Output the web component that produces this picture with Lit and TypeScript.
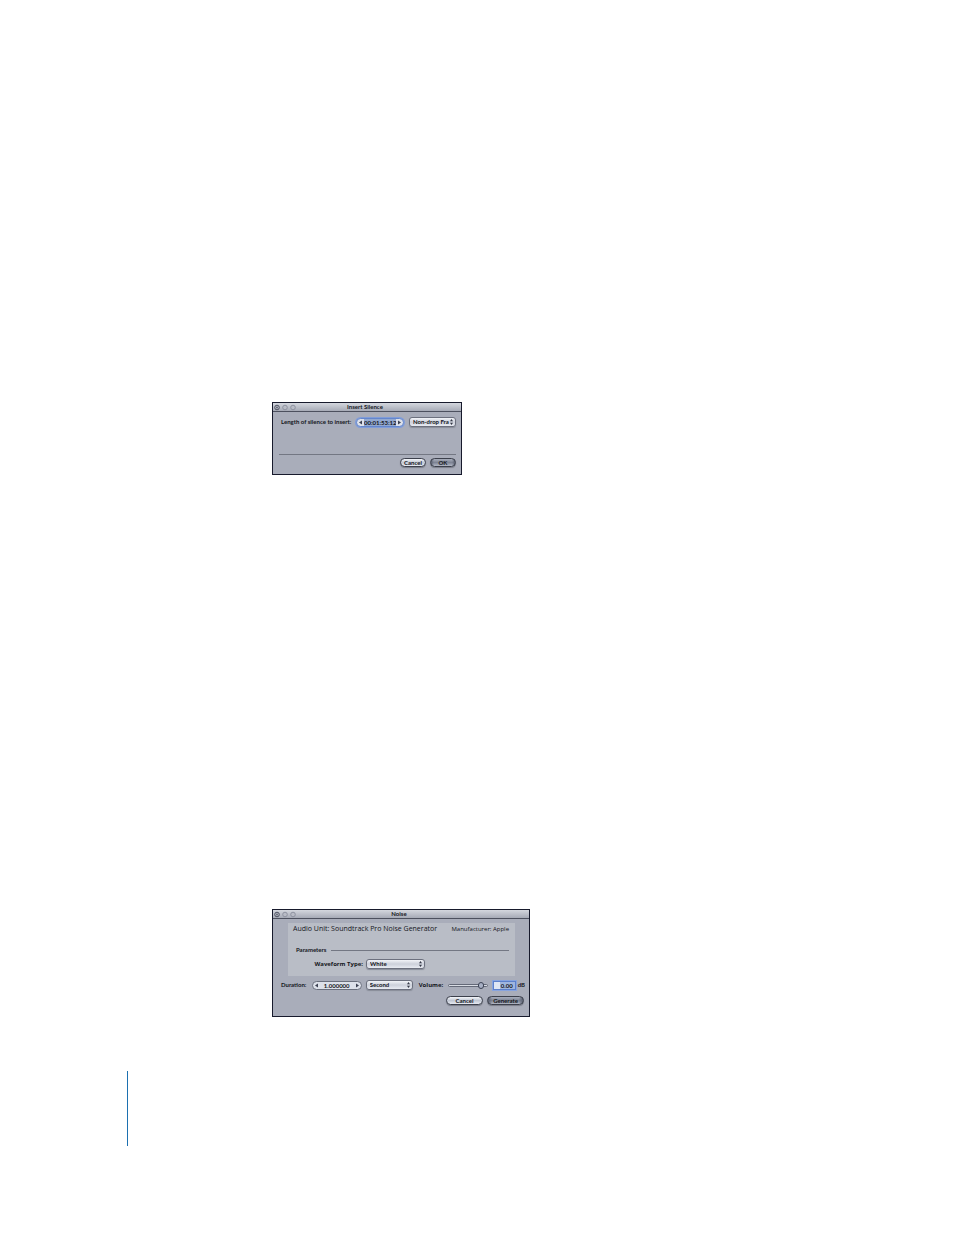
import { LitElement, html, css } from "lit";
import { customElement, property } from "lit/decorators.js";

const controls = css`
  :host {
    display: block;
    font: 700 6px/10px Lato, "Noto Sans", sans-serif;
    color: #14161c;
  }
  * {
    box-sizing: border-box;
  }
  button,
  input,
  select {
    margin: 0;
    padding: 0;
    border: 0;
    background: none;
    font: inherit;
    color: inherit;
    outline: none;
    appearance: none;
  }
  .row {
    display: flex;
    align-items: center;
  }
  .push {
    height: 9px;
    border: 1px solid #3c404c;
    border-radius: 5px;
    background: linear-gradient(#f4f6fa, #c2c8d4 50%, #e6eaf2);
    line-height: 7px;
    text-align: center;
    box-shadow: 0 1px 1px #7a7e8a;
  }
  .primary {
    background: linear-gradient(90deg, #5c6272, transparent 12% 88%, #5c6272),
      linear-gradient(#a8aebc, #7e8494 50%, #b0b6c4);
  }
  .menu {
    position: relative;
    display: flex;
    flex: none;
    height: 10px;
    border: 1px solid #6c707e;
    border-radius: 3px;
    background: linear-gradient(#f2f4f8, #ccd0da 50%, #e8ebf2);
    box-shadow: 0 1px 1px #888c98;
  }
  .menu select {
    width: 100%;
    height: 8px;
    padding-left: 3px;
    padding-right: 6px;
    line-height: 8px;
    overflow: hidden;
    text-overflow: clip;
  }
  .menu svg {
    position: absolute;
    right: 2px;
    top: 1px;
    pointer-events: none;
  }
  .spin {
    display: flex;
    flex: none;
    align-items: center;
    height: 9px;
    border: 1px solid #6b707e;
    border-radius: 5px;
    background: #dde1ea;
  }
  .spin input {
    flex: 1;
    min-width: 0;
    height: 7px;
    line-height: 7px;
    text-align: center;
  }
  .spin button {
    display: flex;
    justify-content: center;
    width: 7px;
  }
  .focused {
    border-color: #6486cc;
    box-shadow: 0 0 0 1px #809cd8;
  }
  .focused input {
    background: #92a8d0;
  }
  .wide {
    font-family: "Open Sans", "Noto Sans", sans-serif;
  }
  .rule {
    height: 1px;
    background: #737783;
  }
`;

const stepArrow = (left: boolean) => html`
  <svg width="3" height="5" viewBox="0 0 3 5" aria-hidden="true">
    <path d=${left ? "M3 0.5V4.5L0 2.5Z" : "M0 0.5V4.5L3 2.5Z"} fill="#3c4152" />
  </svg>
`;

const menuArrows = html`
  <svg width="3" height="6" viewBox="0 0 3 6" aria-hidden="true">
    <path d="M0 2.3H3L1.5 0ZM0 3.7H3L1.5 6Z" fill="#343846" />
  </svg>
`;

@customElement("panel-window")
export class PanelWindow extends LitElement {
  @property() heading = "";

  static styles = css`
    :host {
      display: block;
      box-sizing: border-box;
      border: 1px solid #171a2c;
      background: #a9adba;
      font: 700 6px/8px Lato, "Noto Sans", sans-serif;
      color: #14161c;
    }
    .bar {
      display: grid;
      grid-template-columns: 1fr auto 1fr;
      align-items: center;
      height: 8px;
      border-bottom: 1px solid #4c505e;
      background: linear-gradient(#d4d7de, #a6aab6);
    }
    h2 {
      margin: 0;
      padding-right: 4px;
      font: inherit;
    }
  `;

  render() {
    return html`
      <header class="bar">
        <svg width="23" height="7" viewBox="0 0 23 7" aria-hidden="true">
          <g fill="#b9bcc6" stroke="#8e92a0">
            <circle cx="4" cy="3.5" r="2.3" stroke="#4c5060" />
            <circle cx="12" cy="3.5" r="2.3" />
            <circle cx="20" cy="3.5" r="2.3" />
          </g>
          <circle cx="4" cy="3.5" r="0.9" fill="#5a5e6c" />
        </svg>
        <h2>${this.heading}</h2>
      </header>
      <slot></slot>
    `;
  }
}

@customElement("silence-dialog")
export class SilenceDialog extends LitElement {
  static styles = [
    controls,
    css`
      :host {
        width: 190px;
      }
      .body {
        padding: 5px 5px 7px 6px;
      }
      .fields {
        padding-left: 2px;
      }
      .fields label {
        flex: 1;
        white-space: nowrap;
      }
      .spin {
        width: 48px;
        margin-right: 5px;
      }
      .menu {
        width: 47px;
      }
      .rule {
        margin: 27px 0 3px;
      }
      .actions {
        justify-content: flex-end;
        gap: 4px;
      }
      .push {
        width: 26px;
      }
    `,
  ];

  render() {
    return html`
      <panel-window heading="Insert Silence">
        <div class="body">
          <div class="row fields">
            <label for="length">Length of silence to insert:</label>
            <div class="spin focused">
              <button aria-label="Decrease length">${stepArrow(true)}</button>
              <input id="length" value="00:01:53:12" />
              <button aria-label="Increase length">${stepArrow(false)}</button>
            </div>
            <div class="menu">
              <select aria-label="Time format">
                <option>Non-drop Fra</option>
              </select>
              ${menuArrows}
            </div>
          </div>
          <div class="rule"></div>
          <div class="row actions">
            <button class="push">Cancel</button>
            <button class="push primary">OK</button>
          </div>
        </div>
      </panel-window>
    `;
  }
}

@customElement("noise-dialog")
export class NoiseDialog extends LitElement {
  static styles = [
    controls,
    css`
      :host {
        width: 258px;
      }
      .unit {
        margin: 4px 14px 0 15px;
        padding: 0 6px 7px 5px;
        background: #b9bdc6;
      }
      .title {
        justify-content: space-between;
        font: 500 7px/12px "Open Sans", "Noto Sans", sans-serif;
      }
      .maker {
        font-size: 6px;
      }
      .group {
        gap: 5px;
        margin-top: 11px;
        padding-left: 3px;
      }
      .group .rule {
        flex: 1;
      }
      .wave {
        justify-content: flex-end;
        gap: 3px;
        margin-top: 5px;
        padding-right: 84px;
      }
      .wave .menu {
        width: 59px;
      }
      .settings {
        padding: 4px 4px 0 8px;
      }
      .duration {
        flex: 1;
      }
      .settings .spin {
        width: 50px;
        margin-right: 4px;
      }
      .settings .menu {
        width: 47px;
        margin-right: 6px;
      }
      .volume {
        width: 29px;
      }
      .slider {
        width: 40px;
        height: 9px;
      }
      .slider::-webkit-slider-runnable-track {
        height: 3px;
        border: 1px solid #646978;
        border-radius: 2px;
        background: #d8dce4;
      }
      .slider::-webkit-slider-thumb {
        appearance: none;
        width: 6px;
        height: 7px;
        margin-top: -3px;
        border: 1px solid #3c4254;
        border-radius: 3px;
        background: #a8b0c4;
      }
      .level {
        width: 23px;
        height: 9px;
        margin: 0 2px 0 5px;
        padding-right: 2px;
        border: 1px solid #5c80cc;
        background: linear-gradient(90deg, #dfe6f4 30%, #a0b6de 30%);
        text-align: right;
        box-shadow: 0 0 0 1px #88a4de;
      }
      .actions {
        justify-content: flex-end;
        gap: 4px;
        padding: 6px 5px 11px;
      }
      .push {
        width: 37px;
      }
    `,
  ];

  render() {
    return html`
      <panel-window heading="Noise">
        <section class="unit">
          <div class="row title">
            <span>Audio Unit: Soundtrack Pro Noise Generator</span>
            <span class="maker">Manufacturer: Apple</span>
          </div>
          <div class="row group">
            <span>Parameters</span>
            <div class="rule"></div>
          </div>
          <div class="row wave">
            <label class="wide" for="wave">Waveform Type:</label>
            <div class="menu">
              <select id="wave">
                <option>White</option>
              </select>
              ${menuArrows}
            </div>
          </div>
        </section>
        <div class="row settings">
          <label class="duration" for="duration">Duration:</label>
          <div class="spin">
            <button aria-label="Decrease duration">${stepArrow(true)}</button>
            <input id="duration" value="1.000000" />
            <button aria-label="Increase duration">${stepArrow(false)}</button>
          </div>
          <div class="menu">
            <select aria-label="Duration unit">
              <option>Second</option>
            </select>
            ${menuArrows}
          </div>
          <label class="volume wide" for="volume">Volume:</label>
          <input class="slider" id="volume" type="range" value="92" />
          <input class="level" aria-label="Volume in decibels" value="0.00" />
          <span>dB</span>
        </div>
        <div class="row actions">
          <button class="push">Cancel</button>
          <button class="push primary">Generate</button>
        </div>
      </panel-window>
    `;
  }
}

@customElement("app-root")
export class AppRoot extends LitElement {
  static styles = css`
    :host {
      display: block;
      background: #fff;
    }
    main {
      display: flex;
      flex-direction: column;
      padding: 402px 0 54px 272px;
      gap: 434px;
    }
    footer {
      margin: 0 0 88px 127px;
      height: 75px;
      border-left: 1px solid #1c70b0;
    }
  `;

  render() {
    return html`
      <main>
        <silence-dialog></silence-dialog>
        <noise-dialog></noise-dialog>
      </main>
      <footer></footer>
    `;
  }
}
